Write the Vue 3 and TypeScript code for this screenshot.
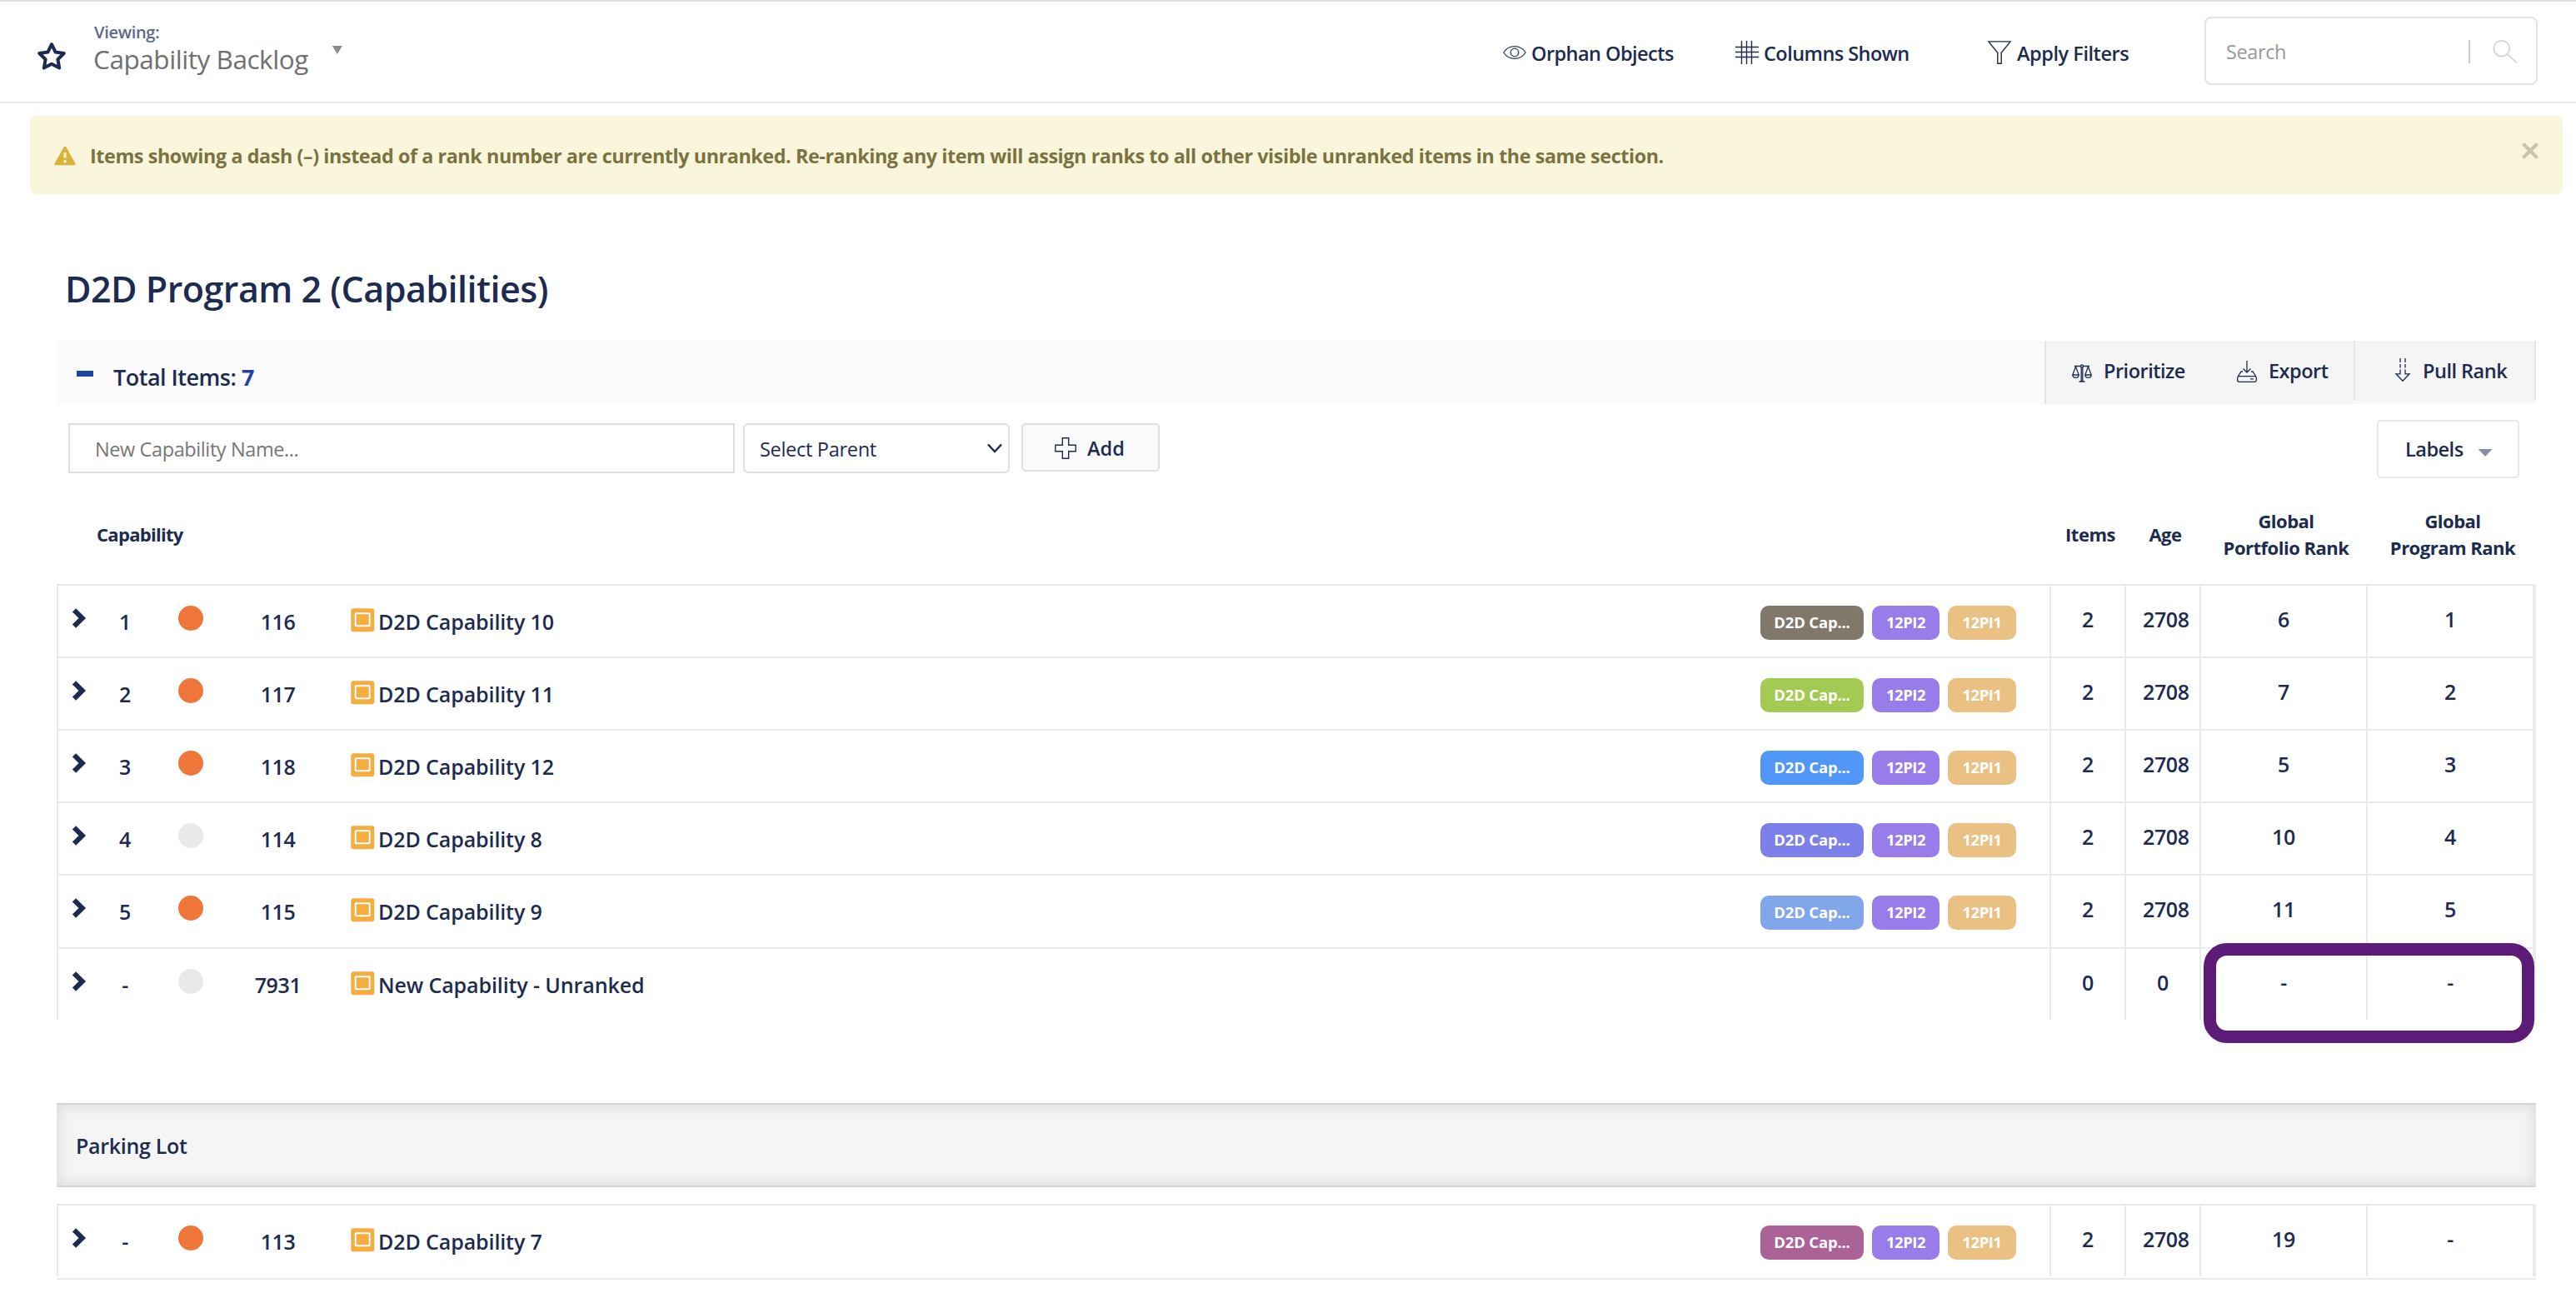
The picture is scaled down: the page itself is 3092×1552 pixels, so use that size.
<script setup lang="ts">
interface Item {
  rank: string
  active: boolean
  id: string
  name: string
  tag?: string
  items: string
  age: string
  portfolio: string
  program: string
}

const ranked: Item[] = [
  { rank: '1', active: true, id: '116', name: 'D2D Capability 10', tag: '#81786b', items: '2', age: '2708', portfolio: '6', program: '1' },
  { rank: '2', active: true, id: '117', name: 'D2D Capability 11', tag: '#a3ca52', items: '2', age: '2708', portfolio: '7', program: '2' },
  { rank: '3', active: true, id: '118', name: 'D2D Capability 12', tag: '#5197f8', items: '2', age: '2708', portfolio: '5', program: '3' },
  { rank: '4', active: false, id: '114', name: 'D2D Capability 8', tag: '#7b80ea', items: '2', age: '2708', portfolio: '10', program: '4' },
  { rank: '5', active: true, id: '115', name: 'D2D Capability 9', tag: '#82a6ec', items: '2', age: '2708', portfolio: '11', program: '5' },
  { rank: '-', active: false, id: '7931', name: 'New Capability - Unranked', items: '0', age: '0', portfolio: '-', program: '-' },
]
const parked: Item[] = [
  { rank: '-', active: true, id: '113', name: 'D2D Capability 7', tag: '#ab6297', items: '2', age: '2708', portfolio: '19', program: '-' },
]
const sections = [
  { key: 'ranked', rows: ranked },
  { key: 'parked', rows: parked },
]
</script>

<template>
  <div class="page">
    <header class="top">
      <svg class="star" width="36" height="36" viewBox="0 0 36 36"><path d="M18 3.2 22.6 12.6 32.8 14 25.4 21.2 27.2 31.6 18 26.7 8.8 31.6 10.6 21.2 3.2 14 13.4 12.6Z" fill="none" stroke="#1c2b4f" stroke-width="4" stroke-linejoin="round" /></svg>
      <div class="viewing">
        <div class="v-label"><span>Viewing:</span></div>
        <div class="v-name"><span>Capability Backlog</span><i class="v-caret"></i></div>
      </div>
      <nav class="nav">
        <div class="nav-item">
          <svg width="28" height="28" viewBox="0 0 28 28" fill="none" stroke="#33415f" stroke-width="1.3"><path d="M.8 14C4 9 8.500 6.700 14 6.700S24 9 27.200 14C24 19 19.500 21.300 14 21.300S4 19 .8 14Z" /><circle cx="14" cy="14" r="4.800" /></svg>
          <span class="n1">Orphan Objects</span>
        </div>
        <div class="nav-item">
          <svg width="28" height="28" viewBox="0 0 28 28" fill="none" stroke="#1c2b4f" stroke-width="1.4"><path d="M7.500 0V28M13.500 0V28M19.500 0V28M0 7.500H28M0 13.500H28M0 19.500H28" /></svg>
          <span class="n2">Columns Shown</span>
        </div>
        <div class="nav-item">
          <svg width="28" height="28" viewBox="0 0 28 28" fill="none" stroke="#1c2b4f" stroke-width="1.4"><path d="M.9.9H27.100L16.200 14.200V27.200H11.800V14.200Z" /></svg>
          <span class="n3">Apply Filters</span>
        </div>
        <div class="search">
          <span>Search</span>
          <i class="bar"></i>
          <svg width="30" height="28" viewBox="0 0 30 28" fill="none" stroke="#d0d0d0" stroke-width="1.6"><circle cx="10.800" cy="10.200" r="9.400" /><path d="M17.300 17 29 27.400" /></svg>
        </div>
      </nav>
    </header>

    <div class="alert">
      <svg width="26" height="24" viewBox="0 0 26 24"><path d="M13 2 24 21.800H2Z" fill="#dbb13b" stroke="#dbb13b" stroke-width="3" stroke-linejoin="round" /><path d="M13 8V14.500M13 17.200V20.200" stroke="#faf6db" stroke-width="3" /></svg>
      <span class="msg">Items showing a dash (–) instead of a rank number are currently unranked. Re-ranking any item will assign ranks to all other visible unranked items in the same section.</span>
      <svg class="close" width="20" height="20" viewBox="0 0 20 20"><path d="M1.500 1.500 18.500 18.500M18.500 1.500 1.500 18.500" stroke="#c8c5af" stroke-width="4.200" /></svg>
    </div>

    <main class="main">
      <h1><span>D2D Program 2 (Capabilities)</span></h1>

      <div class="summary">
        <i class="minus"></i>
        <span class="total">Total Items: <b>7</b></span>
        <div class="tools">
          <div class="tool priority">
            <svg width="24" height="22" viewBox="0 0 24 22" fill="none" stroke="#1c2b4f" stroke-width="1.300"><path d="M3 2.500H21M11.200 4V20.500M12.800 4V20.500M8.500 21H15.500M4.500 3 .8 13H8.200ZM19.500 3 15.800 13H23.200ZM.8 13C1 17.500 8 17.500 8.200 13M15.800 13C16 17.500 23 17.500 23.200 13" /><circle cx="12" cy="2.500" r="1.500" fill="#f5f5f5" /></svg>
            <span>Prioritize</span>
          </div>
          <div class="tool export">
            <svg width="24" height="26" viewBox="0 0 24 26" fill="none" stroke="#1c2b4f" stroke-width="1.300"><path d="M12 0V14M7.500 9.500 12 14 16.500 9.500M7 13H5L.8 19.500M17 13H19L23.200 19.500M2.500 18.700H21.500Q23.300 18.700 23.300 20.500V23.500Q23.300 25.300 21.500 25.300H2.500Q.7 25.300.7 23.500V20.500Q.7 18.700 2.500 18.700ZM16 21.800H20" /></svg>
            <span>Export</span>
          </div>
          <div class="tool pull">
            <svg width="18" height="28" viewBox="0 0 18 28" fill="none" stroke="#1c2b4f" stroke-width="1.300"><path d="M6 0V5M12 0V5M6 7V11.500M12 7V11.500M6 13.500V18.800H1L9 27.200 17 18.800H12V13.500" /></svg>
            <span>Pull Rank</span>
          </div>
        </div>
      </div>

      <div class="form">
        <div class="field"><span>New Capability Name...</span></div>
        <div class="select">
          <span>Select Parent</span>
          <svg width="18" height="12" viewBox="0 0 18 12"><path d="M1 1.500 9 10 17 1.500" fill="none" stroke="#1c2b4f" stroke-width="2.500" /></svg>
        </div>
        <div class="add">
          <svg width="26" height="26" viewBox="0 0 26 26"><path d="M9.300.8H16.700V9.300H25.200V16.700H16.700V25.200H9.300V16.700H.8V9.300H9.300Z" fill="none" stroke="#1c2b4f" stroke-width="1.400" /></svg>
          <span>Add</span>
        </div>
        <div class="labels"><span>Labels</span><i></i></div>
      </div>

      <div class="thead">
        <div class="th-cap"><span>Capability</span></div>
        <div class="th"><span>Items</span></div>
        <div class="th"><span>Age</span></div>
        <div class="th"><span>Global<br>Portfolio Rank</span></div>
        <div class="th"><span>Global<br>Program Rank</span></div>
      </div>

      <template v-for="s in sections" :key="s.key">
        <div v-if="s.key === 'parked'" class="parking"><span>Parking Lot</span></div>
        <section :class="['rows', s.key]">
          <div v-for="r in s.rows" :key="r.id" class="row">
            <div class="c-chev"><svg width="18" height="24" viewBox="0 0 18 24"><path d="M3 2.300 12.800 12 3 21.700" fill="none" stroke="#1c2b4f" stroke-width="6" /></svg></div>
            <div class="c-txt">{{ r.rank }}</div>
            <div class="c-dot"><i :class="{ on: r.active }"></i></div>
            <div class="c-txt">{{ r.id }}</div>
            <div class="c-name">
              <svg width="29" height="29" viewBox="0 0 29 29"><rect x=".3" y=".3" width="28" height="28" rx="3" fill="#f4ad3e" /><rect x="5.700" y="6.200" width="17" height="15" rx="1" fill="none" stroke="#fff" stroke-width="2" /></svg>
              <span>{{ r.name }}</span>
            </div>
            <div class="c-tags">
              <template v-if="r.tag">
                <span class="tag t1" :style="{ background: r.tag }">D2D Cap...</span>
                <span class="tag t2">12PI2</span>
                <span class="tag t3">12PI1</span>
              </template>
            </div>
            <div class="c-num">{{ r.items }}</div>
            <div class="c-num">{{ r.age }}</div>
            <div class="c-num">{{ r.portfolio }}</div>
            <div class="c-num">{{ r.program }}</div>
          </div>
          <div v-if="s.key === 'ranked'" class="highlight"></div>
        </section>
      </template>
    </main>
  </div>
</template>

<style>
body { background: #fff; }
</style>

<style scoped>
* { box-sizing: border-box; }
.page {
  width: 3092px;
  height: 1552px;
  overflow: hidden;
  background: #fff;
  color: #1c2b4f;
  font-family: "Open Sans", "Noto Sans", sans-serif;
  font-size: 24px;
  font-weight: 600;
  white-space: nowrap;
}
svg { display: block; flex: none; overflow: visible; }
i { display: block; flex: none; }

.top {
  display: flex;
  height: 124px;
  border-top: 2px solid #dedee3;
  border-bottom: 2px solid #e8e8e8;
}
.star { margin: 48px 0 0 44px; }
.viewing { width: 1691px; margin: 25px 0 0 33px; }
.v-label { height: 24px; line-height: 24px; font-size: 20px; color: #5d6a85; letter-spacing: -0.3px; }
.v-name { display: flex; height: 40px; line-height: 40px; font-size: 31.500px; font-weight: 400; color: #707070; letter-spacing: -0.45px; margin-left: -1px; }
.v-caret { width: 12px; height: 10px; margin: 4px 0 0 29px; background: #8c8c8c; clip-path: polygon(0 0, 100% 0, 50% 100%); }
.nav { display: grid; grid-template-columns: 279px 303px 260px 400px; align-items: start; }
.nav-item { display: flex; height: 28px; margin-top: 47px; line-height: 31px; gap: 6px; font-size: 23.500px; letter-spacing: -0.55px; }
.n3 { padding-left: 1px; letter-spacing: -0.45px; }
.search {
  display: flex; align-items: center; height: 82px; margin-top: 18px; padding: 0 22px 0 24px;
  border: 2px solid #e3e3e3; border-radius: 8px; font-weight: 400; color: #999; font-size: 23.500px; letter-spacing: -0.4px;
}
.search span { margin-top: 2px; }
.search .bar { width: 2px; height: 28px; margin: 2px 27px 0 auto; background: #ccc; }
.search svg { margin-top: 2px; }

.alert {
  display: flex; align-items: flex-start; height: 94px; margin: 15px 16px 0 36px; padding: 0 29px;
  border-radius: 8px; background: #faf6db; color: #7a7240;
}
.alert > svg { margin-top: 36px; }
.msg { margin: 32px 0 0 17px; line-height: 32px; font-size: 23.300px; font-weight: 700; letter-spacing: -0.4px; }
.alert .close { margin: 32px 0 0 auto; }

.main { margin: 0 48px 0 68px; }
h1 { height: 60px; margin: 86px 0 0; padding-left: 10px; line-height: 56px; font-size: 43px; font-weight: 600; letter-spacing: -0.5px; }
.summary { display: flex; height: 76px; margin-top: 30px; background: #fafafa; }
.minus { width: 20px; height: 7px; margin: 36px 0 0 24px; background: #1f45a3; }
.total { margin: 24px 0 0 24px; line-height: 40px; font-size: 27px; letter-spacing: -0.5px; }
.total b { color: #1f45a3; font-weight: 700; }
.tools { display: flex; margin-left: auto; width: 590px; border-left: 2px solid #e5e5e5; }
.tool { display: flex; background: #f5f5f5; line-height: 32px; letter-spacing: -0.5px; font-size: 23.500px; }
.tool span { margin-top: 20px; }
.priority { width: 198px; padding-left: 31px; }
.priority svg { margin: 28px 14px 0 0; }
.export { width: 171px; padding-left: 31px; }
.export svg { margin: 24px 14px 0 0; }
.pull { width: 219px; height: 72px; padding-left: 48px; border-left: 2px solid #e5e5e5; border-right: 2px solid #e5e5e5; }
.pull svg { margin: 21px 15px 0 0; }

.form { display: flex; height: 115px; padding: 23px 20px 0 14px; font-weight: 400; font-size: 23.500px; }
.field { width: 800px; height: 60px; padding-left: 30px; border: 2px solid #dedede; line-height: 58px; color: #767676; letter-spacing: -0.4px; }
.select {
  display: flex; align-items: center; justify-content: space-between; width: 320px; height: 60px; margin-left: 10px;
  padding: 1px 7px 0 18px; border: 2px solid #dedede; border-radius: 6px; letter-spacing: -0.3px; font-weight: 500;
}
.select svg { margin-top: -2px; }
.add {
  display: flex; align-items: center; width: 166px; height: 58px; margin-left: 14px; padding: 1px 0 0 38px; gap: 13px;
  border: 2px solid #dedede; border-radius: 5px; background: #fafafa; font-weight: 600;
}
.add svg { margin-top: 1px; }
.labels {
  display: flex; width: 171px; height: 70px; margin: -4px 0 0 auto; padding-left: 32px; line-height: 67px;
  border: 2px solid #e8e8e8; border-radius: 5px; font-weight: 600; letter-spacing: -0.5px;
}
.labels i { width: 17px; height: 9px; margin: 33px 0 0 18px; background: #8a90a3; clip-path: polygon(0 0, 100% 0, 50% 100%); }

.thead {
  display: grid; grid-template-columns: 1fr 90px 90px 200px 200px; align-items: center; height: 101px; padding: 0 4px 19px 48px;
  font-weight: 700; font-size: 22px; line-height: 32px; letter-spacing: -0.5px;
}
.th-cap { letter-spacing: -0.7px; }
.th { padding-left: 8px; text-align: center; }

.rows { position: relative; }
.row {
  display: grid; grid-template-columns: 56px 48px 110px 99px 1fr auto 90px 90px 200px 200px; height: 87px;
  border-top: 2px solid #eaeaea; border-left: 2px solid #eaeaea; border-right: 4px solid #eaeaea;
  font-size: 25px; line-height: 34px; letter-spacing: -0.4px; font-weight: 560;
}
.row:nth-child(5) { height: 88px; }
.c-chev { padding: 27px 0 0 16px; }
.c-txt { padding-top: 26px; text-align: center; }
.c-dot { padding: 24px 40px 0; }
.c-dot i { width: 30px; height: 30px; border-radius: 50%; background: #e9e9e9; }
.c-dot i.on { background: #ee763b; }
.c-name { display: flex; padding-left: 38px; letter-spacing: -0.1px; }
.c-name svg { margin-top: 27px; }
.c-name span { margin: 26px 0 0 4px; }
.c-tags { display: flex; gap: 10px; padding: 24px 40px 0 0; }
.tag { height: 41px; border-radius: 10px; color: #fff; text-align: center; line-height: 40px; font-size: 18.500px; font-weight: 700; letter-spacing: -0.5px; }
.t1 { width: 124px; letter-spacing: -0.2px; }
.t2 { width: 81px; background: #987ce9; }
.t3 { width: 82px; background: #eac083; }
.c-num { padding: 23px 20px 0; border-left: 2px solid #eaeaea; text-align: center; }
.highlight { position: absolute; left: 2577px; top: 431px; width: 397px; height: 120px; border: 15px solid #5b1b76; border-radius: 28px; }

.parking {
  height: 101px; margin-top: 100px; padding-left: 23px; line-height: 99px; font-size: 25px; background: #f5f5f5;
  border-top: 2px solid #d5d5d5; border-bottom: 2px solid #d5d5d5; box-shadow: inset 0 0 20px rgba(0, 0, 0, 0.12);
  letter-spacing: -0.3px; font-weight: 560;
}
.parked { margin-top: 20px; padding-bottom: 2px; border-bottom: 2px solid #eaeaea; }
</style>
